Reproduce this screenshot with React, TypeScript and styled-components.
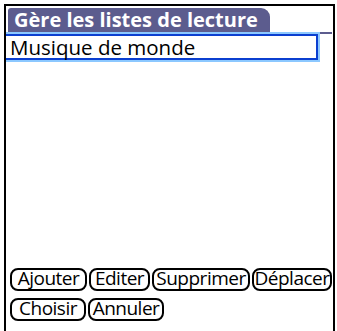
import { FunctionComponent } from "react";
import styled, { createGlobalStyle } from "styled-components";

const GlobalStyle = createGlobalStyle`
  html, body {
    margin: 0;
    padding: 0;
    background: #ffffff;
  }
`;

const Frame = styled.main`
  box-sizing: border-box;
  margin: 4px 2px 0 4px;
  width: 331px;
  height: 327px;
  border: 2px solid #000;
  border-bottom: none;
  display: flex;
  flex-direction: column;
  font-family: "Open Sans", "DejaVu Sans", sans-serif;
`;

const TitleBar = styled.div`
  margin: 2px 1px 0 2px;
  border-bottom: 2px solid #5c5c8e;
  display: flex;
`;

const TitleTab = styled.div`
  width: 262px;
  height: 24px;
  background: #5c5c8e;
  border-radius: 3px 9px 0 0;
  color: #fff;
  font-weight: 700;
  font-size: 20px;
  line-height: 24px;
  padding-left: 6px;
  box-sizing: border-box;
  white-space: nowrap;
`;

const List = styled.div`
  position: relative;
  margin-top: -2px;
  width: 314px;
  box-sizing: border-box;
  border: 2px solid #8cc8ff;
  border-left: none;
  box-shadow: inset 0 2px 0 0 #0b3fd0, inset -2px 0 0 0 #0b3fd0, inset 0 -2px 0 0 #0b3fd0;
  height: 30px;
  display: flex;
  align-items: center;
  padding-left: 4px;
  background: #fff;
`;

const ListItem = styled.div`
  font-size: 20.5px;
  font-weight: 500;
  color: #000;
  line-height: 20px;
  white-space: nowrap;
`;

const Spacer = styled.div`
  flex: 1;
`;

const ButtonRows = styled.div`
  display: flex;
  flex-direction: column;
  gap: 7px;
  padding: 0 0 10px 4px;
`;

const Row = styled.div`
  display: flex;
  gap: 2px;
`;

const PalmButton = styled.div<{ $w: number }>`
  box-sizing: border-box;
  width: ${(p) => p.$w}px;
  height: 23px;
  border: 2px solid #000;
  border-radius: 8px;
  display: flex;
  align-items: center;
  justify-content: center;
  padding-bottom: 2px;
  font-size: 19px;
  line-height: 19px;
  font-weight: 500;
  letter-spacing: -0.5px;
  color: #000;
  white-space: nowrap;
`;

const rows: { label: string; w: number }[][] = [
  [
    { label: "Ajouter", w: 77 },
    { label: "Editer", w: 61 },
    { label: "Supprimer", w: 98 },
    { label: "Déplacer", w: 80 },
  ],
  [
    { label: "Choisir", w: 76 },
    { label: "Annuler", w: 76 },
  ],
];

const App: FunctionComponent = () => {
  return (
    <>
      <GlobalStyle />
      <Frame>
        <TitleBar>
          <TitleTab>Gère les listes de lecture</TitleTab>
        </TitleBar>
        <List>
          <ListItem>Musique de monde</ListItem>
        </List>
        <Spacer />
        <ButtonRows>
          {rows.map((row, i) => (
            <Row key={i}>
              {row.map((b) => (
                <PalmButton key={b.label} $w={b.w}>
                  {b.label}
                </PalmButton>
              ))}
            </Row>
          ))}
        </ButtonRows>
      </Frame>
    </>
  );
};

export default App;
